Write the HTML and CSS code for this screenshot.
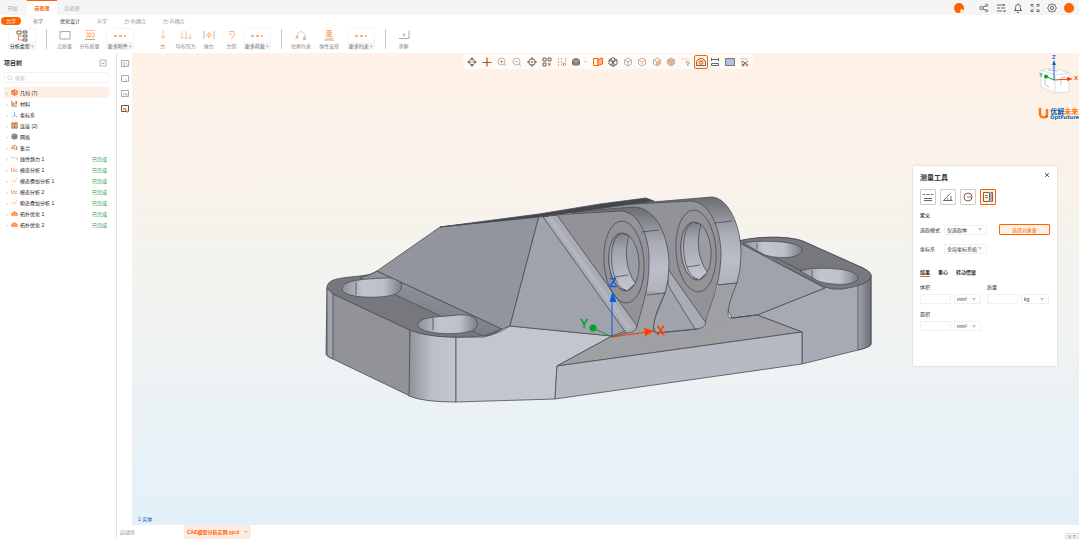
FILE: index.html
```html
<!DOCTYPE html>
<html lang="zh-CN">
  <head>
    <meta charset="UTF-8" />
    <meta name="viewport" content="width=device-width, initial-scale=1.0" />
    <title>前处理</title>
    <link rel="stylesheet" href="styles.css">
  </head>
  <body>
    <header class="titlebar">
      <nav class="tabs">
        <a href="#" class="tab">开始</a>
        <a href="#" class="tab active">前处理</a>
        <a href="#" class="tab">后处理</a>
      </nav>
      <div class="tools">
        <button class="tool avatar" aria-label="助手"><svg viewBox="0 0 12 12"><circle cx="6" cy="6" r="5" fill="#ff6200"/><path d="M3 11l-1-3 3 2z" fill="#ff6200"/><path d="M8 7l3 2-2 2-2-1z" fill="#fff" stroke="#ffb27d" stroke-width=".7"/></svg></button>
        <button class="tool" aria-label="分享"><svg viewBox="0 0 10 10" class="line"><circle cx="2.5" cy="5" r="1.6"/><circle cx="7.7" cy="2.3" r="1.1"/><circle cx="7.7" cy="7.7" r="1.1"/><path d="M4 4.3l2.7-1.5M4 5.8l2.7 1.4"/></svg></button>
        <button class="tool" aria-label="任务"><svg viewBox="0 0 10 10" class="line"><path d="M1 2h8M1 5h3M5 5h4M1 8h5M8 1v2M9 7v2M7 8h2"/></svg></button>
        <button class="tool" aria-label="通知"><svg viewBox="0 0 10 10" class="line"><path d="M1 7.500h8M2.500 7.500V4.500a2.500 3 0 0 1 5 0v3M4 9.500h2M5 .5v1"/></svg></button>
        <button class="tool" aria-label="全屏"><svg viewBox="0 0 10 10" class="line"><path d="M1 3.500V1.500h2.500M6.500 1.500H9v2M9 6.500v2H6.500M3.500 8.500H1v-2M1.500 2l2 2M8.500 2l-2 2M8.500 8l-2-2M1.500 8l2-2"/></svg></button>
        <button class="tool" aria-label="设置"><svg viewBox="0 0 10 10" class="line"><path d="M5 .7l1.200 1.100 1.700-.2.4 1.700L9.500 5l-1.200 1.700-.4 1.700-1.700-.2L5 9.300 3.800 8.200l-1.700.2-.4-1.700L.5 5l1.200-1.700.4-1.700 1.700.2z"/><circle cx="5" cy="5" r="1.600"/></svg></button>
        <button class="tool" aria-label="账户"><svg viewBox="0 0 10 10"><circle cx="5" cy="5" r="5" fill="#ff6200"/></svg></button>
      </div>
    </header>

    <nav class="menu">
      <a href="#" class="menu-item pill">力学</a>
      <a href="#" class="menu-item">热学</a>
      <a href="#" class="menu-item strong">优化设计</a>
      <a href="#" class="menu-item dim">声学</a>
      <a href="#" class="menu-item dim">力-热耦合</a>
      <a href="#" class="menu-item dim">力-声耦合</a>
    </nav>

    <div class="ribbon">
      <button class="cmd boxed first"><svg viewBox="0 0 12 12" fill="none"><path d="M1 1h4v3H1zM7 1h4v2H7zM7 5h4v2H7zM7 9h4v2H7z" stroke="#666"/><path d="M2.500 4v6H6M2.500 6H6" stroke="#ff8c45"/></svg><span>分析类型 <i>▾</i></span></button>
      <i class="sep"></i>
      <div class="group">
        <button class="cmd"><svg viewBox="0 0 12 12" fill="none"><path d="M1 2.500h10v7.500H1z" stroke="#aaa"/><path d="M0 1.500h3v2H0z" fill="#ffc299"/></svg><span>点质量</span></button>
        <button class="cmd"><svg viewBox="0 0 12 12" fill="none"><path d="M1 1.500h10" stroke="#ffc299"/><path d="M2 4h2v4H2M8 4h2v4H8M5 4h2v4H5z" stroke="#ffb380"/><path d="M1 10.500h10" stroke="#aaa"/></svg><span>分布质量</span></button>
        <button class="cmd boxed"><svg viewBox="0 0 12 12"><path d="M0 5h3v2H0zM5 5h3v2H5zM10 5h2v2h-2z" fill="#ffb380"/></svg><span>更多附件 <i>▾</i></span></button>
      </div>
      <div class="group loads">
        <button class="cmd"><svg viewBox="0 0 12 12" fill="none" stroke="#ffc299"><path d="M6 1.500v8M4 7l2 2.500L8 7"/></svg><span>力</span></button>
        <button class="cmd"><svg viewBox="0 0 12 12" fill="none" stroke="#ffc299"><path d="M2 2v8M.5 8L2 10l1.500-2M6 2v8M4.500 8L6 10l1.500-2M10 5v5M8.500 8l1.500 2 1.500-2"/></svg><span>均布压力</span></button>
        <button class="cmd"><svg viewBox="0 0 12 12" fill="none"><path d="M1 2v8M11 2v8" stroke="#bbb"/><path d="M6 3v6M3.500 6L6 4l2.500 2L6 8z" stroke="#ffb380"/></svg><span>弹力</span></button>
        <button class="cmd"><svg viewBox="0 0 12 12" fill="none" stroke="#ffb380"><path d="M3 2.500h5v4L5 10M3 5h3"/></svg><span>力矩</span></button>
        <button class="cmd boxed"><svg viewBox="0 0 12 12"><path d="M0 5h3v2H0zM5 5h3v2H5zM10 5h2v2h-2z" fill="#ffb380"/></svg><span>更多荷载 <i>▾</i></span></button>
      </div>
      <i class="sep"></i>
      <div class="group limits">
        <button class="cmd"><svg viewBox="0 0 12 12" fill="none"><path d="M2 8C2 1 10 1 10 8" stroke="#bbb" stroke-dasharray="2 1"/><path d="M0 10l2-4 2 3zM8 8h3v3H8zM1 2h2" fill="#ffb380"/></svg><span>位移约束</span></button>
        <button class="cmd"><svg viewBox="0 0 12 12" fill="none"><path d="M3 1.500h6L3 3.500h6l-6 2h6l-6 2h6v2H3" stroke="#ffb380"/><path d="M1 11h10" stroke="#aaa"/></svg><span>弹性支撑</span></button>
        <button class="cmd boxed"><svg viewBox="0 0 12 12"><path d="M0 5h3v2H0zM5 5h3v2H5zM10 5h2v2h-2z" fill="#ffb380"/></svg><span>更多约束 <i>▾</i></span></button>
      </div>
      <i class="sep"></i>
      <div class="group">
        <button class="cmd"><svg viewBox="0 0 12 12" fill="none"><path d="M1 9.500h10V1.500" stroke="#aaa"/><path d="M5 4l3 1.500L5 8z" fill="#ffb380"/></svg><span>求解</span></button>
      </div>
    </div>

    <div class="workspace">
      <aside class="sidebar">
        <div class="side-head">
          <h2>项目树</h2>
          <button aria-label="折叠"><svg viewBox="0 0 8 8" class="pale"><path d="M1 1h6v6H1z"/><path d="M2.500 3.500L4 5l1.500-1.500" stroke="#ff8c45"/></svg></button>
        </div>
        <label class="search">
          <svg viewBox="0 0 8 8" fill="none" stroke="#ccc"><circle cx="3.500" cy="3.500" r="2.500"/><path d="M5.500 5.500L7 7"/></svg>
          <input type="text" placeholder="搜索" aria-label="搜索" />
        </label>
        <ul class="tree">
          <li class="selected"><i>›</i><svg viewBox="0 0 8 8"><path d="M1 2.200L4 .8l3 1.400v3.600L4 7.200 1 5.800z" fill="#ffb380" stroke="#ff6200"/><path d="M1 2l3 1.500V7" stroke="#555" stroke-width=".7" fill="none"/></svg><span>几何 (7)</span></li>
          <li><i>›</i><svg viewBox="0 0 8 8"><path d="M1 1v6h6" stroke="#777" fill="none"/><path d="M2 3h2v3H2zM5 1h2v4H5z" fill="#ff7a24"/></svg><span>材料</span></li>
          <li><i>›</i><svg viewBox="0 0 8 8" fill="none" stroke="#86a8c8"><path d="M4 1v4L1 7M4 5l3 2"/></svg><span>坐标系</span></li>
          <li><i>›</i><svg viewBox="0 0 8 8"><path d="M1 1h2.500v6H1zM4.500 1H7v6H4.500z" fill="#ffd0ad" stroke="#a65a2a"/></svg><span>连接 (2)</span></li>
          <li><i>›</i><svg viewBox="0 0 8 8"><path d="M1 2l3-1 3 1v4L4 7 1 6zM1 4h6M4 1v6M2.500 1.500v5M5.500 1.500v5" fill="#bbb" stroke="#666" stroke-width=".7"/></svg><span>网格</span></li>
          <li><i>›</i><svg viewBox="0 0 8 8" fill="none"><path d="M1 6c0-6 6-6 6 0" stroke="#777"/><path d="M2 6V4h2v3M6 4v3" stroke="#ff7a24"/></svg><span>集合</span></li>
          <li><i>›</i><svg viewBox="0 0 8 8" fill="none" stroke="#bbb"><path d="M0 3h2M3 3h2M6 3h1v3"/></svg><span>线性静力 1</span><b>已完成</b></li>
          <li><i>›</i><svg viewBox="0 0 8 8" fill="none" stroke="#ff9a5c"><path d="M.5 2v4h7M2 5l1.500-2L5 5l2-2"/></svg><span>模态分析 1</span><b>已完成</b></li>
          <li><i>›</i><svg viewBox="0 0 8 8" fill="none" stroke="#ffc299"><path d="M.5 5l2-1L4 6l3-5"/></svg><span>模态叠加分析 1</span><b>已完成</b></li>
          <li><i>›</i><svg viewBox="0 0 8 8" fill="none" stroke="#ff9a5c"><path d="M.5 2v4h7M2 5l1.500-2L5 5l2-2"/></svg><span>模态分析 2</span><b>已完成</b></li>
          <li><i>›</i><svg viewBox="0 0 8 8" fill="none" stroke="#ffc299"><path d="M.5 5l2-1L4 6l3-5"/></svg><span>瞬态叠加分析 1</span><b>已完成</b></li>
          <li><i>›</i><svg viewBox="0 0 8 8"><path d="M.5 6c0-5 7-5 7 0z" fill="#ffb380" stroke="#ff7a24"/><path d="M4 2v4" stroke="#ff7a24"/></svg><span>拓扑优化 1</span><b>已完成</b></li>
          <li><i>›</i><svg viewBox="0 0 8 8"><path d="M.5 6c0-5 7-5 7 0z" fill="#ffb380" stroke="#ff7a24"/><path d="M4 2v4" stroke="#ff7a24"/></svg><span>拓扑优化 2</span><b>已完成</b></li>
        </ul>
      </aside>

      <div class="main">
        <div class="stage">
          <div class="strip">
            <button aria-label="视图一"><svg viewBox="0 0 8 8" fill="none" stroke="#aaa"><path d="M.5 .5h7v6h-7zM2 3h2M5 3h1M2 5h2"/><path d="M5 6l2-2" stroke="#ffb380"/></svg></button>
            <button aria-label="视图二"><svg viewBox="0 0 8 8" fill="none" stroke="#aaa"><path d="M.5 .5h7v6h-7z"/><path d="M4 4l3 3" stroke="#ffb380"/></svg></button>
            <button aria-label="视图三"><svg viewBox="0 0 8 8" fill="none" stroke="#aaa"><path d="M.5 .5h7v6h-7zM2 4h4"/><path d="M5 7V5h2" stroke="#ffb380"/></svg></button>
            <button aria-label="视图四"><svg viewBox="0 0 8 8" fill="none" stroke="#555"><path d="M.5 .5h7v6h-7zM2 4h3"/><path d="M4 4l3 3.500" stroke="#ff8c45" stroke-width="1.500"/></svg></button>
          </div>

          <main class="viewport">
            <svg class="model" viewBox="132 53 947 472" role="img" aria-label="三维模型">
              <defs>
                <linearGradient id="round"><stop offset="0" stop-color="#8f9299"/><stop offset=".5" stop-color="#bcc0c9"/><stop offset="1" stop-color="#c3c6cf"/></linearGradient>
                <linearGradient id="hole"><stop offset="0" stop-color="#8d9098"/><stop offset=".35" stop-color="#c2c5cf"/><stop offset=".7" stop-color="#bcc0c9"/><stop offset="1" stop-color="#7b7d84"/></linearGradient>
                <linearGradient id="bore" x1="0" y1="0" x2="0" y2="1"><stop offset="0" stop-color="#7f8188"/><stop offset=".3" stop-color="#a3a6ae"/><stop offset=".8" stop-color="#bbbec7"/><stop offset="1" stop-color="#c3c6cf"/></linearGradient>
                <linearGradient id="band" x1="0" y1="0" x2="0" y2="1"><stop offset="0" stop-color="#6a6c72"/><stop offset=".4" stop-color="#a9acb5"/><stop offset=".7" stop-color="#bbbec8"/><stop offset="1" stop-color="#aeb1ba"/></linearGradient>
                <linearGradient id="corner"><stop offset="0" stop-color="#a1a3aa"/><stop offset="1" stop-color="#6c6e75"/></linearGradient>
                <linearGradient id="fillet" x1="0" y1="1" x2=".4" y2="0"><stop offset="0" stop-color="#717278"/><stop offset="1" stop-color="#95989f"/></linearGradient>
              </defs>
              <g stroke="#4a4c57" stroke-width=".8" stroke-linejoin="round">
                <!-- right foot -->
                <path d="M735 242C755 236 793 235 807 243L863 268Q871 272 871 278V344Q871 347 858 350L802 364V332L757 315 825 288Z" fill="#a7aab3"/>
                <path d="M858 285Q871 282 871 276V344Q871 347 858 350Z" fill="url(#corner)"/>
                <path d="M735 242C755 236 793 235 807 243L863 268Q873 273 871 277C867 284 858 286 843 289Q832 290 825 287L740 244Z" fill="#77787d"/>
                <path d="M743 243C755 240 802 240 802 250C801 259 777 259 765 255Z" fill="url(#hole)"/>
                <path d="M800 271C806 267 858 266 858 278C856 287 829 285 818 281Z" fill="url(#hole)"/>
                <path d="M774 257l28 14M812 270v8M757 243v6" fill="none"/>
                <path d="M730 238l95 50L757 315 732 318 722 300Z" fill="#a0a3ac"/>
                <!-- left foot -->
                <path d="M333 294L410 330V396L333 359Q326 356 326 354L327 287Z" fill="#929397"/>
                <path d="M327 288L333 294V359Q327 357 327 354Z" fill="#a2a5ad"/>
                <path d="M410 330Q430 337 456 337V402Q423 402 409 396Z" fill="url(#round)"/>
                <path d="M456 337H483Q498 334 510 326L612 336 557 366 555 399 456 402Z" fill="#c3c6cf"/>
                <path d="M327 288C326 273 366 280 377 271L502 329Q493 336 483 336Q434 340 410 330L333 294Z" fill="#77787d"/>
                <path d="M377 271L502 329 483 336 396 295 360 278Q371 275 377 271Z" fill="url(#fillet)"/>
                <path d="M342 289C342 279 370 279 385 278C405 276 406 291 393 295C378 299 342 298 342 289Z" fill="url(#hole)"/>
                <path d="M418 325C418 316 442 317 458 315C480 313 482 327 471 331C456 336 418 334 418 325Z" fill="url(#hole)"/>
                <path d="M356 282v13M433 318v12" fill="none"/>
                <!-- sloped body and base block -->
                <path d="M377 271L440 227 539 216 510 326 502 329Z" fill="#92959d"/>
                <path d="M539 216H550L634 330 612 336 510 326Z" fill="#a0a3ac"/>
                <path d="M557 366L612 336 650 322 732 318 757 315 802 332Z" fill="#9fa0a4"/>
                <path d="M557 366L802 332V364L555 399Z" fill="#b7bac3"/>
                <!-- rear lug -->
                <path d="M628 204L712 197C729 198 741 227 741 253Q741 270 737 283L718 285 690 240Z" fill="url(#band)"/>
                <path d="M718 285L737 283Q728 304 728 313Q728 319 733 318L728 326 698 330 705 323Z" fill="#9fa0a4" stroke="none"/>
                <path d="M718 285L737 283Q728 304 728 313Q728 319 733 318L757 315" fill="none"/>
                <path d="M570 212L615 205 690 201C710 201 721 229 721 255C720 288 709 307 705 323L669 280 640 225Z" fill="#929297"/>
                <path d="M714 223l18-2" fill="none"/>
                <path d="M665 293L669 275 697 329 657 333Q651 330 655 318Z" fill="#a0a3ac"/>
                <path d="M668 269L706 323Q704 329 695 329L668 285Z" fill="#a9acb5"/>
                <g transform="rotate(-4 696 251)"><ellipse cx="696" cy="251" rx="20" ry="41" fill="none"/><ellipse cx="696" cy="251" rx="15" ry="29" fill="#9a9ca4"/><path d="M695 222C676 223 676 279 697 280L706 273C697 260 697 239 703 225Z" fill="url(#bore)"/><path d="M694 223C680 228 680 276 696 279" fill="none"/></g>
                <path d="M687 267l13-2" fill="none"/>
                <!-- front lug -->
                <path d="M570 212L633 207C657 207 669 238 669 265Q669 280 665 293L647 295 620 240Z" fill="url(#band)"/>
                <path d="M640 290L665 293Q657 309 654 322Q652 332 657 333L645 337 626 334 630 322Z" fill="#9fa0a4" stroke="none"/>
                <path d="M647 295L665 293Q657 309 654 322Q652 332 657 333L697 329M626 333l-14 4" fill="none"/>
                <path d="M553 215L620 211C640 211 650 240 649 262C649 292 641 308 637 327Z" fill="#929297"/>
                <path d="M641 232l18-2" fill="none"/>
                <path d="M543 217L557 215 637 326Q636 333 626 333Z" fill="#a9acb5"/>
                <path d="M549 217L630 329" stroke="#b3b6bf" stroke-width="4"/>
                <g transform="rotate(-4 624 262)"><ellipse cx="624" cy="262" rx="20" ry="41" fill="none"/><ellipse cx="624" cy="262" rx="15" ry="29" fill="#9a9ca4"/><path d="M623 233C604 234 604 289 625 291L634 284C625 271 625 250 631 236Z" fill="url(#bore)"/><path d="M622 234C608 239 608 287 624 290" fill="none"/></g>
                <path d="M615 277l13-2" fill="none"/>
                <!-- top ridge -->
                <path d="M440 227L539 214 600 204 646 198 654 201 618 206 570 213 539 217Z" fill="#44464d"/>
              </g>
              <g class="axis">
                <path d="M612 337L654 331" stroke="#ff3b00"/><path d="M644 328l10 3-9 5z" fill="#ff3b00"/>
                <path d="M612 337L593 328" stroke="#00a42c"/><circle cx="593" cy="328" r="3.500" fill="#00a42c"/>
                <path d="M612 337V296" stroke="#0a5fe0"/><path d="M612.500 291l4 11h-7z" fill="#0a5fe0"/>
                <text x="657" y="335" fill="#ff3b00" stroke="#ff3b00">X</text>
                <text x="580" y="328" fill="#00a42c" stroke="#00a42c">Y</text>
                <text x="609" y="287" fill="#0a5fe0" stroke="#0a5fe0">Z</text>
              </g>
            </svg>

            <div class="viewbar">
              <div class="viewgroup nav">
                <button aria-label="旋转"><svg viewBox="0 0 10 10" class="line"><path d="M5 .5l1.500 2h-3zM5 9.500l1.500-2h-3zM.8 5l2-1.500v3zM9.200 5l-2-1.500v3z"/><path d="M3 6l4-2" stroke="#ff8c45"/></svg></button>
                <button aria-label="平移"><svg viewBox="0 0 10 10" class="line"><path d="M5 .5v9" stroke="#ff8c45" stroke-width="2"/><path d="M.5 5.500h9"/></svg></button>
                <button aria-label="放大"><svg viewBox="0 0 10 10" class="pale"><circle cx="4.500" cy="4.500" r="3.500"/><path d="M7 7l2 2"/><path d="M3 4.500h3M4.500 3v3" stroke="#ff8c45"/></svg></button>
                <button aria-label="缩小"><svg viewBox="0 0 10 10" class="pale"><circle cx="4.500" cy="4.500" r="3.500"/><path d="M7 7l2 2"/><path d="M3 4.500h3" stroke="#ffb380"/></svg></button>
                <button aria-label="居中"><svg viewBox="0 0 10 10" class="line"><circle cx="5" cy="5" r="3.300"/><path d="M5 0v3M5 7v3M0 5h3M7 5h3"/><circle cx="5" cy="5" r=".8" stroke="#ff6200"/></svg></button>
                <button aria-label="框选"><svg viewBox="0 0 10 10" class="line"><path d="M1 1h3v3H1zM6 1h3v3H6zM1 6h3v3H1z"/><path d="M6 6l3 1-2 2z" fill="#ff8c45" stroke="#ff8c45"/></svg></button>
                <button aria-label="多选"><svg viewBox="0 0 10 10" class="pale"><path d="M1.500 1v8M4.500 1v8M8.500 1v4" stroke-dasharray="2 1"/><path d="M6 6l3 1-2 2z" stroke="#ff8c45"/></svg></button>
                <button aria-label="实体"><svg viewBox="0 0 10 10"><path d="M1 2.500L5 1l4 1.500v5L5 9.300 1 7.500z" fill="#777"/><path d="M1.500 3L5 4.500 8.500 3M5 4.500V9" stroke="#ddd" stroke-width=".7" fill="none"/></svg></button>
              </div>
              <i class="caret"></i>
              <div class="viewgroup show">
                <button aria-label="剖切"><svg viewBox="0 0 10 10"><path d="M.5 1.500H5v7H.5z" fill="#fff" stroke="#ff6200"/><path d="M5 2.500L9.500 1v6L5 8.500z" fill="#ffb380" stroke="#ff6200"/></svg></button>
                <button aria-label="网格"><svg viewBox="0 0 10 10" class="line"><path d="M1 3l4-2.500L9 3v4L5 9.500 1 7zM1 3l4 2 4-2M5 5v4M3 2l4 6M7 2L3 8"/></svg></button>
                <button aria-label="顶点"><svg viewBox="0 0 10 10" class="pale"><path d="M1.500 3L5 1l3.500 2v4L5 9 1.500 7zM1.500 3L5 5l3.500-2M5 5v4"/><path d="M4.500 5h1" stroke="#ff8c45"/></svg></button>
                <button aria-label="边"><svg viewBox="0 0 10 10" class="pale"><path d="M1.500 3L5 1l3.500 2v4L5 9 1.500 7z"/><path d="M1.500 3L5 5l3.500-2M5 5v2" stroke="#ffb380"/></svg></button>
                <button aria-label="面"><svg viewBox="0 0 10 10" class="pale"><path d="M1.500 3L5 1l3.500 2v4L5 9 1.500 7z"/><path d="M5 5l3-2v4L5 9z" fill="#ffb380" stroke="#ffb380"/><path d="M1.500 3L5 5v4"/></svg></button>
                <button aria-label="体"><svg viewBox="0 0 10 10" class="pale"><path d="M1.500 3L5 1l3.500 2v4L5 9 1.500 7z" fill="#ffb380"/><path d="M1.500 3L5 5l3.500-2M5 5v4"/></svg></button>
                <button aria-label="点选"><svg viewBox="0 0 10 10" class="pale"><path d="M0 2h9" stroke="#ffc299" stroke-dasharray="2 1"/><path d="M5 4l4 2-2 1v2z"/></svg></button>
                <button class="on" aria-label="测量"><svg viewBox="0 0 10 10" class="line"><path d="M.5 8.500V6a4.500 4.500 0 0 1 9 0v2.500z"/><path d="M3 7a2 2.500 0 0 1 4 0zM2.500 4h5" stroke="#ff6200"/></svg></button>
                <button aria-label="标尺"><svg viewBox="0 0 10 10" class="line"><path d="M1.500 1v3M8.500 1v3M1 2.500h8M1.500 6.500h7v2h-7z"/></svg></button>
                <button aria-label="背景"><svg viewBox="0 0 10 10"><path d="M.5 1.500h9v7h-9z" fill="#aec2e0" stroke="#777"/></svg></button>
                <button aria-label="裁剪"><svg viewBox="0 0 10 10" class="line"><path d="M1 2h7" stroke="#ffb380"/><path d="M4 8l5-4M4 4l4 4M2 5h2"/><circle cx="4" cy="8" r="1"/><circle cx="8" cy="8" r="1" stroke="#ff6200"/></svg></button>
              </div>
            </div>

            <svg class="cube" viewBox="0 0 43 46" aria-label="方向">
              <path d="M5 17l14-2 14 5v19l-14 1-14-6z" fill="#fff" stroke="#ddd"/>
              <path d="M5 17l14 5 14-2M19 22v18" fill="none" stroke="#ddd"/>
              <path d="M9 22v10l4 2M24 25l6-1M25 27v5M12 17l10 1" fill="none" stroke="#bcc4d2"/>
              <path d="M18 27V10" stroke="#0a5fe0"/><path d="M18 7l2 5h-4z" fill="#0a5fe0"/>
              <path d="M18 27l16-1" stroke="#ff3b00"/><path d="M31 24l6 2-6 2z" fill="#ff3b00"/>
              <path d="M18 27l-9-4" stroke="#00a42c"/><circle cx="10" cy="23.500" r="2" fill="#00a42c"/>
              <text x="16" y="6" fill="#0a5fe0">Z</text><text x="38" y="27" fill="#ff3b00">X</text><text x="3" y="24" fill="#00a42c">Y</text>
            </svg>

            <div class="brand">
              <svg viewBox="0 0 12 12" fill="none"><path d="M2 0v6a3.500 3.500 0 0 0 7 0V1" stroke="#ff7a12" stroke-width="2.500"/><path d="M8 10l2-2" stroke="#0a5ba8"/></svg>
              <div><strong>优解<em>未来</em></strong><small>OptFuture</small></div>
            </div>

            <section class="panel">
              <header class="panel-head">
                <h2>测量工具</h2>
                <button aria-label="关闭"><svg viewBox="0 0 6 6" class="line"><path d="M1 1l4 4M5 1L1 5"/></svg></button>
              </header>
              <div class="modes">
                <button aria-label="距离"><svg viewBox="0 0 10 10" class="line"><path d="M0 2.500h2M8 2.500h2M1 6.500h8M1 8.500h8"/><path d="M3 2.500h4" stroke="#ff6200"/></svg></button>
                <button aria-label="角度"><svg viewBox="0 0 10 10" class="line"><path d="M9.500 8.500H.5L7 1.500"/><path d="M5 8.500a3 3 0 0 0-1.500-3" stroke="#ff6200"/><path d="M8 4v4"/></svg></button>
                <button aria-label="半径"><svg viewBox="0 0 10 10" class="line"><circle cx="5" cy="5" r="4"/><path d="M4 5h5" stroke="#ff6200"/></svg></button>
                <button class="on" aria-label="质量属性"><svg viewBox="0 0 10 10" class="line"><path d="M.5 .5h6v9h-6zM8 .5h1.500v9H8z"/><path d="M2 3.500h3M2 5.500h3" stroke="#ff6200"/></svg></button>
              </div>
              <h3>定义</h3>
              <div class="field">
                <label for="pick">选取模式</label>
                <select id="pick"><option>仅选取体</option></select>
                <button class="choose">选择对象集</button>
              </div>
              <div class="field">
                <label for="csys">坐标系</label>
                <select id="csys"><option>全局坐标系统</option></select>
              </div>
              <nav class="result-tabs">
                <a href="#" class="on">结果</a>
                <a href="#">重心</a>
                <a href="#">转动惯量</a>
              </nav>
              <div class="results">
                <div>
                  <label for="volume">体积</label>
                  <p><input id="volume" type="text" /><select aria-label="体积单位"><option>mm³</option></select></p>
                </div>
                <div>
                  <label for="mass">质量</label>
                  <p><input id="mass" type="text" /><select aria-label="质量单位"><option>kg</option></select></p>
                </div>
                <div>
                  <label for="area">面积</label>
                  <p><input id="area" type="text" /><select aria-label="面积单位"><option>mm²</option></select></p>
                </div>
              </div>
            </section>

            <span class="picked">1 实体</span>
          </main>
        </div>

        <footer class="docs">
          <a href="#" class="doc">启动页</a>
          <a href="#" class="doc active">CAE模型分析实例.yjcd<i class="caret"></i></a>
          <span class="hint">显示</span>
        </footer>
      </div>
    </div>
  </body>
</html>
```

FILE: styles.css
```css
* {
  box-sizing: border-box;
}

body {
  margin: 0;
  height: 100vh;
  display: flex;
  flex-direction: column;
  overflow: hidden;
  background: #fff;
  color: #333;
  font-family: "Liberation Sans", "Noto Sans CJK SC", sans-serif;
  font-size: 5px;
  line-height: 8px;
}

a {
  color: inherit;
  text-decoration: none;
}

button {
  display: flex;
  align-items: center;
  justify-content: center;
  padding: 0;
  border: 0;
  background: none;
  color: inherit;
  font: inherit;
  cursor: pointer;
}

input,
select {
  min-width: 0;
  padding: 0 2px;
  border: 1px solid #f0f0f0;
  border-radius: 1px;
  background: #fff;
  color: #333;
  font: inherit;
  outline: none;
}

select {
  appearance: none;
  background: url("data:image/svg+xml,%3Csvg xmlns='http://www.w3.org/2000/svg' viewBox='0 0 4 3'%3E%3Cpath d='M0 0h4L2 3z' fill='%23c4c4c4'/%3E%3C/svg%3E") no-repeat right 4px center / 4px 3px;
}

h2,
h3,
p {
  margin: 0;
}

i {
  font-style: normal;
}

svg {
  display: block;
  flex: none;
}

.line {
  fill: none;
  stroke: #666;
}

.pale {
  fill: none;
  stroke: #b4b4b4;
}

.caret {
  width: 4px;
  height: 2px;
  background: #bbb;
  clip-path: polygon(0 0, 100% 0, 50% 100%);
}

/* title bar */
.titlebar {
  display: flex;
  justify-content: space-between;
  height: 15px;
  background: #f5f5f5;
}

.tabs {
  display: flex;
  color: #aaa;
}

.tab {
  display: flex;
  align-items: center;
  justify-content: center;
  width: 30px;
  border-top: 1px solid transparent;
}

.tab:first-child {
  width: 27px;
  padding-right: 2px;
}

.tab.active {
  border-color: #ff6200;
  background: #fff;
  color: #ff6200;
  font-weight: bold;
}

.tools {
  display: flex;
  align-items: center;
  gap: 7px;
  padding-right: 5px;
}

.tool svg {
  width: 10px;
  height: 10px;
}

.avatar {
  margin-right: 7px;
}

.avatar svg {
  width: 12px;
  height: 12px;
}

/* menu */
.menu {
  display: flex;
  align-items: center;
  gap: 17px;
  height: 12px;
  padding-left: 1px;
  color: #777;
}

.pill {
  width: 20px;
  margin-right: -5px;
  border-radius: 4px;
  background: #ff6200;
  color: #fff;
  text-align: center;
}

.strong {
  color: #333;
}

.dim {
  color: #999;
}

/* ribbon */
.ribbon {
  display: flex;
  align-items: center;
  height: 26px;
  padding: 0 8px 2px;
  color: #888;
}

.group {
  display: flex;
  padding-left: 5px;
}

.cmd {
  flex-direction: column;
  justify-content: space-between;
  width: 25px;
  height: 22px;
  padding-top: 1px;
  white-space: nowrap;
}

.cmd svg {
  width: 12px;
  height: 12px;
}

.cmd i {
  color: #bbb;
}

.boxed {
  width: 28px;
  margin-left: 4px;
  border: 1px solid #f5f5f5;
  border-radius: 2px;
  background: linear-gradient(#fff 13px, #f7f7f7 13px);
  color: #666;
}

.first {
  margin-left: 0;
  color: #222;
}

.sep {
  width: 1px;
  height: 20px;
  margin: 0 0 0 10px;
  background: #ccc;
}

.loads {
  padding-left: 17px;
}

.loads .cmd {
  width: 23px;
}

.loads .boxed {
  width: 28px;
  margin-left: 0;
}

.limits .cmd {
  width: 28px;
}

/* project tree */
.workspace {
  flex: 1;
  display: flex;
  min-height: 0;
}

.sidebar {
  width: 117px;
  padding: 4px 7px 0 4px;
  border-right: 1px solid #e4e4e4;
}

.side-head {
  display: flex;
  align-items: center;
  justify-content: space-between;
  height: 12px;
  padding-right: 2px;
}

.side-head h2 {
  font-size: 6px;
}

.side-head svg {
  width: 8px;
  height: 8px;
}

.search {
  display: flex;
  align-items: center;
  height: 11px;
  margin: 3px 0 4px;
  padding-left: 2px;
  border: 1px solid #f2f2f2;
  border-radius: 2px;
}

.search svg {
  width: 6px;
  height: 6px;
}

.search input {
  flex: 1;
  border: 0;
}

.search input::placeholder {
  color: #bbb;
}

.tree {
  margin: 0;
  padding: 0;
  list-style: none;
  color: #222;
}

.tree li {
  display: flex;
  align-items: center;
  height: 11px;
  padding: 0 2px;
  border-radius: 1px;
}

.tree .selected {
  background: #ffeee3;
}

.tree i {
  width: 5px;
  color: #aaa;
}

.tree svg {
  width: 7px;
  height: 7px;
  margin-right: 2px;
}

.tree b {
  margin-left: auto;
  color: #14993a;
  font-weight: normal;
}

/* main area */
.main {
  flex: 1;
  display: flex;
  flex-direction: column;
  min-width: 0;
}

.stage {
  flex: 1;
  display: flex;
  min-height: 0;
}

.strip {
  display: flex;
  flex-direction: column;
  align-items: center;
  gap: 7px;
  width: 15px;
  padding-top: 7px;
}

.strip svg {
  width: 8px;
  height: 8px;
}

.viewport {
  flex: 1;
  position: relative;
  min-width: 0;
  background: linear-gradient(#fff1e6, #f5f3ed 40%, #ecf2f4 72%, #e3f0f9);
}

.model {
  width: 100%;
  height: 100%;
}

.axis {
  fill: none;
  font-family: "Liberation Sans", sans-serif;
  font-size: 12px;
  stroke-width: 1;
}

.axis text {
  stroke-width: .5;
}

.viewbar {
  position: absolute;
  top: 1px;
  left: 35%;
  display: flex;
  align-items: center;
  height: 15px;
  padding: 0 2px;
  border-radius: 2px;
  background: #fffaf6;
}

.viewgroup {
  display: flex;
  justify-content: space-between;
}

.nav {
  width: 118px;
}

.show {
  width: 160px;
  margin-left: 4px;
}

.viewgroup button {
  width: 14px;
  height: 14px;
  border-radius: 2px;
}

.viewgroup svg {
  width: 10px;
  height: 10px;
}

.viewgroup .on {
  border: 1px solid #ff6200;
  background: #fff0e5;
}

.cube {
  position: absolute;
  top: 0;
  right: 0;
  width: 43px;
  height: 46px;
  font-family: "Liberation Sans", sans-serif;
  font-size: 6px;
  font-weight: bold;
}

.brand {
  position: absolute;
  top: 55px;
  right: 0;
  display: flex;
  align-items: center;
  color: #0a5ba8;
}

.brand svg {
  width: 12px;
  height: 12px;
}

.brand strong,
.brand small {
  display: block;
  font-size: 7px;
  line-height: 7px;
}

.brand small {
  font-family: "DejaVu Sans", sans-serif;
  font-size: 5px;
  font-weight: bold;
  line-height: 5px;
}

.brand em {
  color: #ff7a12;
  font-style: normal;
}

/* measure panel */
.panel {
  position: absolute;
  top: 113px;
  right: 22px;
  width: 144px;
  padding: 5px 7px 35px;
  border-radius: 1px;
  background: #fff;
  box-shadow: 0 0 2px rgba(0, 0, 0, 0.2);
}

.panel-head {
  display: flex;
  align-items: flex-start;
  justify-content: space-between;
}

.panel-head h2 {
  font-size: 7px;
  line-height: 14px;
}

.panel-head svg {
  width: 6px;
  height: 6px;
  margin: 1px 0;
}

.modes {
  display: flex;
  gap: 4px;
  margin: 4px 0 6px;
}

.modes button {
  width: 16px;
  height: 16px;
  border: 1px solid #ccc;
  border-radius: 1px;
}

.modes svg {
  width: 10px;
  height: 10px;
}

.modes .on {
  border-color: #ff6200;
  background: #fff0e5;
}

.panel h3 {
  font-size: 5px;
  font-weight: bold;
}

.field {
  display: flex;
  align-items: center;
  height: 11px;
  margin: 5px 0 8px;
}

.field label {
  width: 24px;
}

.field select {
  width: 43px;
  height: 10px;
}

.choose {
  width: 51px;
  height: 11px;
  margin-left: 12px;
  border: 1px solid #ff6200;
  border-radius: 1px;
  background: #fff0e5;
  color: #ff6200;
}

.result-tabs {
  display: flex;
  gap: 8px;
  margin: 14px 0 7px;
  font-weight: bold;
}

.result-tabs .on {
  box-shadow: 0 1px #ff6200;
}

.results {
  display: grid;
  grid-template-columns: 61px 62px;
  gap: 6px;
}

.results label {
  display: block;
}

.results p {
  display: flex;
  gap: 3px;
  margin-top: 3px;
}

.results input {
  width: 31px;
  height: 10px;
}

.results select {
  flex: 1;
  height: 10px;
}

.picked {
  position: absolute;
  left: 6px;
  bottom: 2px;
  color: #0a5ba8;
}

/* document tabs */
.docs {
  position: relative;
  display: flex;
  height: 14px;
  background: #fff;
  color: #888;
}

.doc {
  display: flex;
  align-items: center;
  justify-content: space-between;
  width: 67px;
  padding: 0 3px;
}

.doc.active {
  background: #ffece0;
  color: #ff6200;
  font-weight: bold;
}

.hint {
  position: absolute;
  right: 0;
  bottom: 0;
  height: 6px;
  padding: 0 1px;
  border: 1px solid #ddd;
  color: #777;
  line-height: 6px;
  overflow: hidden;
}
```
